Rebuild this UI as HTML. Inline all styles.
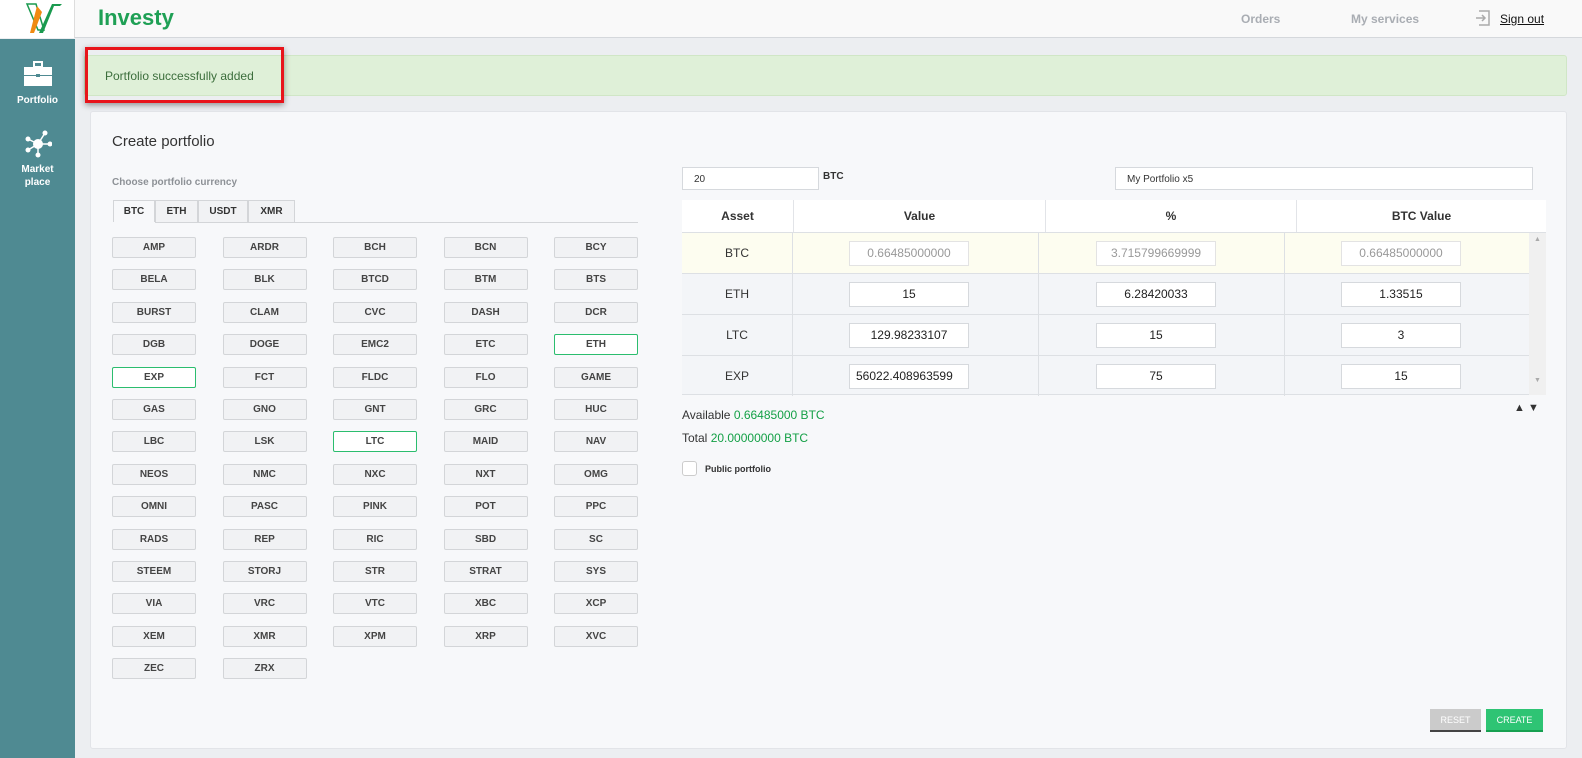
<!DOCTYPE html>
<html><head><meta charset="utf-8"><style>
*{box-sizing:border-box;margin:0;padding:0}
body{width:1582px;height:758px;overflow:hidden;background:#eceef1;font-family:"Liberation Sans",sans-serif;position:relative;color:#333}
.abs{position:absolute}
#hdr{left:0;top:0;width:1582px;height:38px;background:#f9f9f9;border-bottom:1px solid #d5d8dc}
#logo{left:0;top:0;width:75px;height:38px;background:#fff;border-right:1px solid #ddd}
#side{left:0;top:39px;width:75px;height:719px;background:#4f8a92;color:#fff;font-weight:bold;font-size:10px;text-align:center}
.nav{font-size:12px;font-weight:bold;color:#a9adb3}
#alert{left:84px;top:55px;width:1483px;height:41px;background:#dff0d8;border:1px solid #d0e6c6;border-radius:3px;font-size:12px;color:#3c6e3c;padding:13px 0 0 20px}
#red{left:85px;top:47px;width:199px;height:56px;border:3px solid #e8141b;box-shadow:0 2px 6px rgba(0,0,0,.4)}
#panel{left:90px;top:111px;width:1477px;height:638px;background:#f7f8fa;border:1px solid #e2e4e8;border-radius:3px}
.grid{display:grid;grid-template-columns:repeat(5,84px);column-gap:26.5px;row-gap:11.4px;left:112px;top:237px}
.grid div{height:21px;border:1px solid #d3d5d8;border-radius:2px;background:#f1f2f4;font-size:10px;font-weight:bold;text-align:center;line-height:19px;color:#444}
.grid div.sel{border-color:#2bbd6e;background:#fff}
.tab{top:200px;height:22px;border:1px solid #d3d5d8;border-bottom:none;font-size:10px;font-weight:bold;text-align:center;line-height:21px;background:#f1f2f4}
.inp{height:23px;border:1px solid #d6d9dd;background:#fff;font-size:10px;padding:6px 0 0 11px}
.th{top:200px;height:33px;background:#fff;border-right:1px solid #e2e4e8;font-size:12px;font-weight:bold;text-align:center;line-height:32px;color:#333}
.row{left:682px;width:847px;height:41px;border-bottom:1px solid #dde0e4;background:#f3f5f8}
.cell{position:absolute;top:0;height:40px;border-right:1px solid #dde0e4;text-align:center;font-size:12px;line-height:40px}
.ci{position:absolute;top:8px;width:120px;height:25px;border:1px solid #d6d9dd;background:#fff;font-size:12px;line-height:23px;text-align:center;overflow:hidden;white-space:nowrap;color:#222}
.g{color:#14a046}
</style></head><body>
<div id="hdr" class="abs"></div>
<div id="logo" class="abs"><svg width="75" height="38"><path d="M27 4h9l8 26h-6z" fill="none" stroke="#1a9a4f" stroke-width="1.5"/><path d="M37 6l5 6-8 21h-4z" fill="#f08a12"/><path d="M52 4h10l-2 2h-6l-11 27h-4z" fill="#1a9a4f"/></svg></div>
<div class="abs" style="left:98px;top:5px;font-size:22px;font-weight:bold;color:#1fa055">Investy</div>
<div class="abs nav" style="left:1241px;top:12px">Orders</div>
<div class="abs nav" style="left:1351px;top:12px">My services</div>
<svg class="abs" style="left:1475px;top:10px" width="16" height="16"><path d="M4 1h10v14H4M1 8h9M7 5l3 3-3 3" fill="none" stroke="#aaa" stroke-width="1.5"/></svg>
<div class="abs" style="left:1500px;top:12px;font-size:12px;text-decoration:underline;color:#111">Sign out</div>
<div id="side" class="abs">
<svg class="abs" style="left:24px;top:22px" width="28" height="26"><rect x="10" y="1" width="8" height="5" fill="none" stroke="#fff" stroke-width="2"/><rect x="0" y="6" width="28" height="8" fill="#fff"/><rect x="0" y="15" width="28" height="10" fill="#fff"/><rect x="12" y="13" width="4" height="3" fill="#4f8a92"/></svg>
<div class="abs" style="left:0;width:75px;top:56px">Portfolio</div>
<svg class="abs" style="left:24px;top:90px" width="28" height="30"><g stroke="#fff" stroke-width="1.5"><line x1="14" y1="15" x2="21" y2="4"/><line x1="14" y1="15" x2="4" y2="10"/><line x1="14" y1="15" x2="26" y2="15"/><line x1="14" y1="15" x2="4" y2="21"/><line x1="14" y1="15" x2="14" y2="26"/></g><g fill="#fff"><circle cx="14" cy="15" r="5"/><circle cx="21" cy="4" r="2.5"/><circle cx="4" cy="10" r="2.5"/><circle cx="26" cy="15" r="2.5"/><circle cx="4" cy="21" r="2.5"/><circle cx="14" cy="26" r="2.5"/></g></svg>
<div class="abs" style="left:0;width:75px;top:124px;line-height:13px">Market<br>place</div>
</div>
<div id="alert" class="abs">Portfolio successfully added</div>
<div id="red" class="abs"></div>
<div id="panel" class="abs"></div>
<div class="abs" style="left:112px;top:133px;font-size:15px;color:#333">Create portfolio</div>
<div class="abs" style="left:112px;top:177px;font-size:10px;font-weight:bold;color:#8d9196">Choose portfolio currency</div>
<div class="abs tab" style="left:113px;width:42px;background:#f7f8fa">BTC</div>
<div class="abs tab" style="left:155px;width:43px">ETH</div>
<div class="abs tab" style="left:198px;width:50px">USDT</div>
<div class="abs tab" style="left:248px;width:47px">XMR</div>
<div class="abs" style="left:155px;top:222px;width:483px;height:1px;background:#d3d5d8"></div>
<div class="abs grid">
<div>AMP</div><div>ARDR</div><div>BCH</div><div>BCN</div><div>BCY</div>
<div>BELA</div><div>BLK</div><div>BTCD</div><div>BTM</div><div>BTS</div>
<div>BURST</div><div>CLAM</div><div>CVC</div><div>DASH</div><div>DCR</div>
<div>DGB</div><div>DOGE</div><div>EMC2</div><div>ETC</div><div class="sel">ETH</div>
<div class="sel">EXP</div><div>FCT</div><div>FLDC</div><div>FLO</div><div>GAME</div>
<div>GAS</div><div>GNO</div><div>GNT</div><div>GRC</div><div>HUC</div>
<div>LBC</div><div>LSK</div><div class="sel">LTC</div><div>MAID</div><div>NAV</div>
<div>NEOS</div><div>NMC</div><div>NXC</div><div>NXT</div><div>OMG</div>
<div>OMNI</div><div>PASC</div><div>PINK</div><div>POT</div><div>PPC</div>
<div>RADS</div><div>REP</div><div>RIC</div><div>SBD</div><div>SC</div>
<div>STEEM</div><div>STORJ</div><div>STR</div><div>STRAT</div><div>SYS</div>
<div>VIA</div><div>VRC</div><div>VTC</div><div>XBC</div><div>XCP</div>
<div>XEM</div><div>XMR</div><div>XPM</div><div>XRP</div><div>XVC</div>
<div>ZEC</div><div>ZRX</div>
</div>
<div class="abs inp" style="left:682px;top:167px;width:137px">20</div>
<div class="abs" style="left:823px;top:171px;font-size:10px;font-weight:bold">BTC</div>
<div class="abs inp" style="left:1115px;top:167px;width:418px">My Portfolio x5</div>
<div class="abs th" style="left:682px;width:112px">Asset</div>
<div class="abs th" style="left:794px;width:252px">Value</div>
<div class="abs th" style="left:1046px;width:251px">%</div>
<div class="abs th" style="left:1297px;width:249px;border-right:none">BTC Value</div>
<div class="abs" style="left:682px;top:232px;width:864px;height:1px;background:#dde0e4"></div>
<div class="abs" style="left:1529px;top:233px;width:17px;height:162px;background:#f0f0f0"><div style="font-size:7px;color:#aaa;text-align:center;margin-top:3px">▲</div><div style="font-size:7px;color:#aaa;text-align:center;margin-top:134px">▼</div></div>
<div class="abs row" style="top:233px;background:#fdfdf0"><div class="cell" style="left:0;width:111px">BTC</div><div class="cell" style="left:111px;width:246px"><div class="ci" style="left:56px;color:#999;border-color:#e3e3e3">0.66485000000</div></div><div class="cell" style="left:357px;width:246px"><div class="ci" style="left:57px;color:#999;border-color:#e3e3e3">3.715799669999</div></div><div class="cell" style="left:603px;width:244px;border:none"><div class="ci" style="left:56px;color:#999;border-color:#e3e3e3">0.66485000000</div></div></div>
<div class="abs row" style="top:274px"><div class="cell" style="left:0;width:111px">ETH</div><div class="cell" style="left:111px;width:246px"><div class="ci" style="left:56px">15</div></div><div class="cell" style="left:357px;width:246px"><div class="ci" style="left:57px">6.28420033</div></div><div class="cell" style="left:603px;width:244px;border:none"><div class="ci" style="left:56px">1.33515</div></div></div>
<div class="abs row" style="top:315px"><div class="cell" style="left:0;width:111px">LTC</div><div class="cell" style="left:111px;width:246px"><div class="ci" style="left:56px">129.98233107</div></div><div class="cell" style="left:357px;width:246px"><div class="ci" style="left:57px">15</div></div><div class="cell" style="left:603px;width:244px;border:none"><div class="ci" style="left:56px">3</div></div></div>
<div class="abs row" style="top:356px;height:39px"><div class="cell" style="left:0;width:111px">EXP</div><div class="cell" style="left:111px;width:246px"><div class="ci" style="left:56px;text-align:left;padding-left:6px">56022.408963599</div></div><div class="cell" style="left:357px;width:246px"><div class="ci" style="left:57px">75</div></div><div class="cell" style="left:603px;width:244px;border:none"><div class="ci" style="left:56px">15</div></div></div>
<div class="abs" style="left:1514px;top:402px;font-size:11px;color:#333">▲ ▼</div>
<div class="abs" style="left:682px;top:408px;font-size:12px">Available <span class="g">0.66485000 BTC</span></div>
<div class="abs" style="left:682px;top:431px;font-size:12px">Total <span class="g">20.00000000 BTC</span></div>
<div class="abs" style="left:682px;top:461px;width:15px;height:15px;border:1px solid #ccc;border-radius:3px;background:#fff"></div>
<div class="abs" style="left:705px;top:464px;font-size:9px;font-weight:bold">Public portfolio</div>
<div class="abs" style="left:1430px;top:709px;width:51px;height:23px;background:#cbcbcb;border-bottom:2px solid #444;color:#fff;font-size:9px;text-align:center;line-height:22px">RESET</div>
<div class="abs" style="left:1486px;top:709px;width:57px;height:23px;background:#2ec474;border-bottom:2px solid #16a050;color:#fff;font-size:9px;text-align:center;line-height:22px">CREATE</div>
</body></html>
